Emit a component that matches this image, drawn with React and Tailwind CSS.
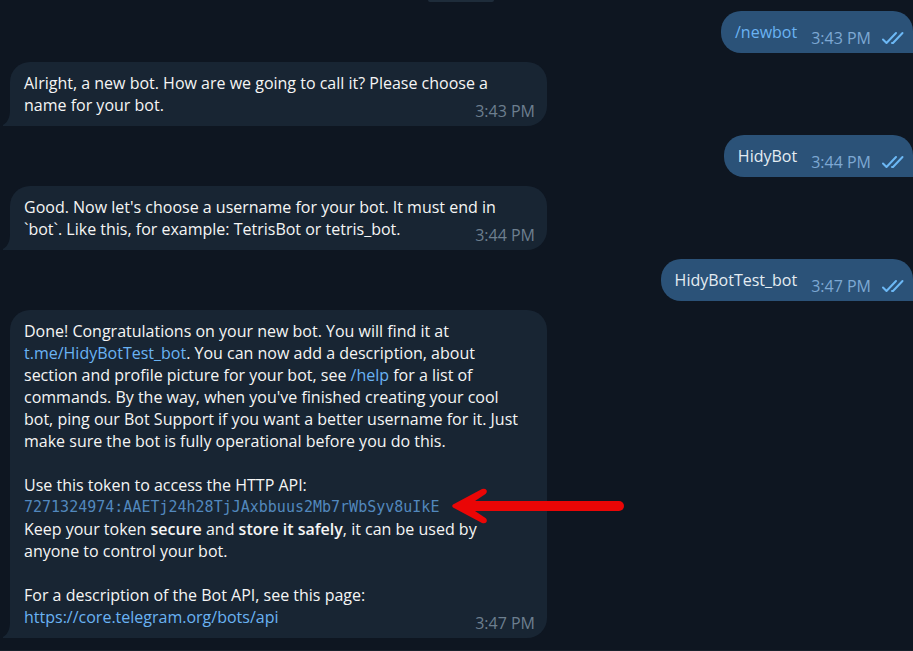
function DoubleCheck() {
  return (
    <svg
      className="h-[14px] w-[22px] shrink-0"
      viewBox="0 0 22 14"
      fill="none"
      stroke="#6cb8f5"
      strokeWidth="2"
      strokeLinecap="round"
      strokeLinejoin="round"
      role="img"
      aria-label="Read"
    >
      <path d="M1 8.5 L4.5 12 L14 2" />
      <path d="M10 12 L11 12 L20.500 2" />
    </svg>
  );
}

function BubbleTail() {
  return (
    <svg className="absolute bottom-0 -left-[7px] h-4 w-2" viewBox="0 0 8 16" aria-hidden="true">
      <path d="M8 0 H7 C7 7 5 12 0 15 V16 H8 Z" fill="#182533" />
    </svg>
  );
}

function Arrow() {
  return (
    <svg
      className="pointer-events-none absolute -top-2 left-full ml-[13px] h-9 w-[173px]"
      viewBox="0 0 173 36"
      aria-hidden="true"
    >
      <path d="M18 18 H167" stroke="#ea0606" strokeWidth="10" strokeLinecap="round" />
      <path
        d="M1 16.500 L30 1 Q33 0 34.500 2 Q35.500 4.500 33.500 6 L23 13 V23 L33.500 30 Q35.500 31.500 34.500 34 Q33 36 30 35 L1 19.500 Q-0.500 18 1 16.500 Z"
        fill="#ea0606"
      />
    </svg>
  );
}

function Link({ href, children }) {
  return (
    <a href={href} className="text-[#6ab3f3] hover:underline">
      {children}
    </a>
  );
}

function Outgoing({ time, children }) {
  return (
    <article className="flex self-end rounded-[20px] rounded-br-none bg-[#2b5278] pr-[9px] pl-[14px] text-[#e4ecf2]">
      <p className="py-[10px]">{children}</p>
      <div className="ml-[14px] flex items-center gap-[11px] self-end pb-1">
        <time className="text-[#7da8d3]">{time}</time>
        <DoubleCheck />
      </div>
    </article>
  );
}

function Incoming({ time, children }) {
  return (
    <article className="relative ml-[10px] grid w-full max-w-[537px] rounded-[20px] rounded-bl-none bg-[#182533] text-[#f5f5f5]">
      <BubbleTail />
      <div className="col-start-1 row-start-1 space-y-[22px] py-[10px] pr-5 pl-[14px]">
        {children}
      </div>
      <time className="col-start-1 row-start-1 self-end justify-self-end pr-3 pb-1 text-[#6d7f8f]">
        {time}
      </time>
    </article>
  );
}

export default function App() {
  return (
    <main className="flex min-h-screen flex-col justify-between overflow-hidden bg-[#0e1621] font-['Open_Sans',sans-serif] text-base leading-[22px]">
      <div className="flex flex-col gap-[9px]">
        <div className="ml-[428px] h-[2px] w-[66px] rounded-b-full bg-[#1e2c3a]" />

        <Outgoing time="3:43 PM">
          <Link href="#newbot">/newbot</Link>
        </Outgoing>

        <Incoming time="3:43 PM">
          <p>Alright, a new bot. How are we going to call it? Please choose a name for your bot.</p>
        </Incoming>

        <Outgoing time="3:44 PM">HidyBot</Outgoing>

        <Incoming time="3:44 PM">
          <p>
            Good. Now let's choose a username for your bot. It must end in `bot`. Like this, for
            example: TetrisBot or tetris_bot.
          </p>
        </Incoming>

        <Outgoing time="3:47 PM">HidyBotTest_bot</Outgoing>

        <Incoming time="3:47 PM">
          <p>
            Done! Congratulations on your new bot. You will find it at{" "}
            <Link href="https://t.me/HidyBotTest_bot">t.me/HidyBotTest_bot</Link>. You can now add a
            description, about section and profile picture for your bot, see{" "}
            <Link href="#help">/help</Link> for a list of commands. By the way, when you've finished
            creating your cool bot, ping our Bot Support if you want a better username for it. Just
            make sure the bot is fully operational before you do this.
          </p>
          <div>
            <p>Use this token to access the HTTP API:</p>
            <div className="relative w-fit">
              <code className="block font-['DejaVu_Sans_Mono',monospace] text-[15px] leading-[22px] text-[#5288bd]">
                7271324974:AAETj24h28TjJAxbbuus2Mb7rWbSyv8uIkE
              </code>
              <Arrow />
            </div>
            <p>
              Keep your token <strong className="font-semibold">secure</strong> and{" "}
              <strong className="font-semibold">store it safely</strong>, it can be used by anyone to
              control your bot.
            </p>
          </div>
          <div>
            <p>For a description of the Bot API, see this page:</p>
            <Link href="https://core.telegram.org/bots/api">https://core.telegram.org/bots/api</Link>
          </div>
        </Incoming>
      </div>
      <footer className="h-px bg-[#17212b]" />
    </main>
  );
}
